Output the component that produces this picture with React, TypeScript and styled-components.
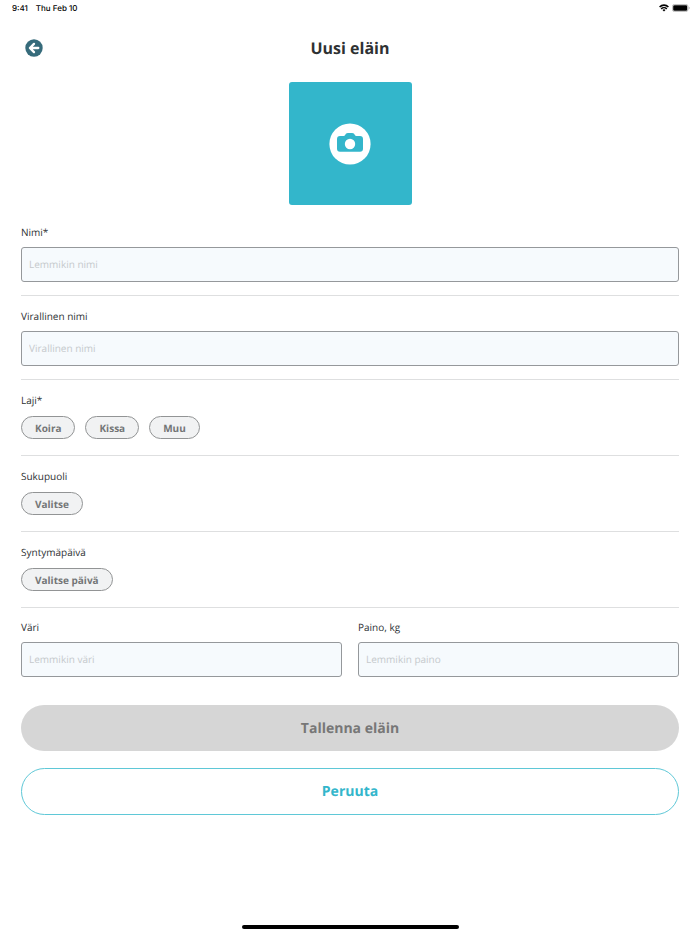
import React from "react";
import styled, { createGlobalStyle } from "styled-components";

const GlobalStyle = createGlobalStyle`
  * { box-sizing: border-box; }
  body {
    margin: 0;
    background: #fff;
    color: #2e3133;
    font-family: "Open Sans", sans-serif;
    text-rendering: geometricPrecision;
  }
  button, input { font-family: inherit; margin: 0; text-rendering: inherit; }
`;

const Screen = styled.div`
  min-height: 100vh;
  display: flex;
  flex-direction: column;
`;

const StatusBar = styled.div`
  display: flex;
  align-items: center;
  justify-content: space-between;
  height: 16px;
  padding: 0 10px 0 12px;
  color: #000;
  font: 500 8px/16px Inter, sans-serif;
`;

const StatusGroup = styled.div<{ $gap: number }>`
  display: flex;
  align-items: center;
  gap: ${(p) => p.$gap}px;
`;

const Header = styled.header`
  display: grid;
  grid-template-columns: 18px 1fr 18px;
  align-items: center;
  height: 64px;
  padding: 0 25px;
`;

const BackButton = styled.button`
  display: flex;
  padding: 0;
  border: 0;
  background: none;
`;

const Title = styled.h1`
  margin: 0;
  text-align: center;
  font-size: 16px;
  line-height: 24px;
  font-weight: 700;
`;

const Form = styled.form`
  display: flex;
  flex-direction: column;
  padding: 2px 21px 0;
`;

const PhotoButton = styled.button`
  display: flex;
  align-items: center;
  justify-content: center;
  align-self: center;
  width: 123px;
  height: 123px;
  margin-bottom: 7px;
  padding: 0;
  border: 0;
  border-radius: 3px;
  background: #33b6cb;
`;

const Section = styled.div`
  display: flex;
  flex-direction: column;
  gap: 7px;
  padding: 12px 0 13px;
  border-bottom: 1px solid #dedfe0;
`;

const ChipSection = styled.fieldset`
  min-width: 0;
  margin: 0;
  padding: 12px 0 16px;
  border: 0;
  border-bottom: 1px solid #dedfe0;
`;

const Columns = styled.div`
  display: grid;
  grid-template-columns: 1fr 1fr;
  gap: 16px;
  padding: 11px 0 28px;
`;

const Field = styled.div`
  display: flex;
  flex-direction: column;
  gap: 7px;
`;

const Label = styled.label`
  font-size: 10px;
  line-height: 16px;
`;

const GroupLabel = styled.div`
  margin-bottom: 8px;
  font-size: 10px;
  line-height: 16px;
`;

const TextInput = styled.input`
  width: 100%;
  height: 35px;
  padding: 0 7px 1px;
  border: 1px solid #95989b;
  border-radius: 3px;
  background: #f6fafd;
  color: #2e3133;
  font-size: 10px;
  &::placeholder { color: #c5c9cc; opacity: 1; }
`;

const Chips = styled.div`
  display: flex;
  flex-wrap: wrap;
  gap: 10px;
`;

const Chip = styled.button`
  height: 23px;
  padding: 0 13px;
  border: 1px solid #929495;
  border-radius: 12px;
  background: #f1f2f3;
  color: #747677;
  font-size: 10px;
  line-height: 16px;
  font-weight: 700;
`;

const ActionButton = styled.button<{ $outlined?: boolean }>`
  height: ${(p) => (p.$outlined ? 47 : 46)}px;
  margin-bottom: 17px;
  border: ${(p) => (p.$outlined ? "1px solid #5fc8d7" : "0")};
  border-radius: 24px;
  background: ${(p) => (p.$outlined ? "#fff" : "#d6d6d6")};
  color: ${(p) => (p.$outlined ? "#33b6cb" : "#777")};
  font-size: 14px;
  font-weight: 700;
`;

const HomeIndicator = styled.div`
  align-self: center;
  width: 31%;
  height: 4px;
  margin: auto 0 5px;
  border-radius: 2px;
  background: #000;
`;

function WifiIcon() {
  return (
    <svg width="10" height="8" viewBox="0 0 10 8" fill="none" stroke="#000" strokeWidth="1.6" aria-hidden="true">
      <path d="M.6 3a6.2 6.2 0 0 1 8.8 0M2.2 4.9a4 4 0 0 1 5.6 0" />
      <path d="M5 7.6 3.5 6.1a2.1 2.1 0 0 1 3 0Z" fill="#000" stroke="none" />
    </svg>
  );
}

function BatteryIcon() {
  return (
    <svg width="18" height="8" viewBox="0 0 18 8" aria-hidden="true">
      <rect x=".4" y=".4" width="15.6" height="7.2" rx="2.2" fill="#fff" stroke="#aaa" strokeWidth=".8" />
      <rect x="1.2" y="1.2" width="14" height="5.6" rx="1.3" />
      <path d="M16.8 2.7v2.6q.9-.3.9-1.3t-.9-1.3Z" fill="#aaa" />
    </svg>
  );
}

function BackIcon() {
  return (
    <svg width="18" height="18" viewBox="0 0 18 18" fill="none" aria-hidden="true">
      <circle cx="9" cy="9" r="8.7" fill="#366b7b" />
      <path d="M9 4.9 4.9 9 9 13.1M5.2 9h8.1" stroke="#fff" strokeWidth="2.3" strokeLinecap="round" strokeLinejoin="round" />
    </svg>
  );
}

function CameraIcon() {
  return (
    <svg width="42" height="42" viewBox="0 0 42 42" aria-hidden="true">
      <circle cx="21" cy="21" r="20.6" fill="#fff" />
      <path
        d="M11 13h3.6q1 0 1.6-1l.5-.9Q17.500 9.900 19 9.900h4q1.500 0 2.300 1.200l.5.900q.6 1 1.600 1H31q3 0 3 3v9.800q0 3-3 3H11q-3 0-3-3V16q0-3 3-3Z"
        fill="#33b6cb"
      />
      <circle cx="21" cy="21" r="5.2" fill="#fff" />
    </svg>
  );
}

interface TextFieldProps {
  id: string;
  label: string;
  placeholder: string;
}

function TextField({ id, label, placeholder }: TextFieldProps) {
  return (
    <Field>
      <Label htmlFor={id}>{label}</Label>
      <TextInput id={id} type="text" placeholder={placeholder} />
    </Field>
  );
}

function ChipGroup({ id, label, options }: { id: string; label: string; options: string[] }) {
  return (
    <ChipSection aria-labelledby={id}>
      <GroupLabel id={id}>{label}</GroupLabel>
      <Chips>
        {options.map((option) => (
          <Chip key={option} type="button">{option}</Chip>
        ))}
      </Chips>
    </ChipSection>
  );
}

export default function App() {
  return (
    <Screen>
      <GlobalStyle />
      <StatusBar>
        <StatusGroup $gap={8}>
          <span>9:41</span>
          <span>Thu Feb 10</span>
        </StatusGroup>
        <StatusGroup $gap={3}>
          <WifiIcon />
          <BatteryIcon />
        </StatusGroup>
      </StatusBar>
      <Header>
        <BackButton type="button" aria-label="Takaisin">
          <BackIcon />
        </BackButton>
        <Title>Uusi eläin</Title>
      </Header>
      <Form>
        <PhotoButton type="button" aria-label="Lisää kuva">
          <CameraIcon />
        </PhotoButton>
        <Section>
          <TextField id="name" label="Nimi*" placeholder="Lemmikin nimi" />
        </Section>
        <Section>
          <TextField id="official-name" label="Virallinen nimi" placeholder="Virallinen nimi" />
        </Section>
        <ChipGroup id="species" label="Laji*" options={["Koira", "Kissa", "Muu"]} />
        <ChipGroup id="sex" label="Sukupuoli" options={["Valitse"]} />
        <ChipGroup id="birthday" label="Syntymäpäivä" options={["Valitse päivä"]} />
        <Columns>
          <TextField id="color" label="Väri" placeholder="Lemmikin väri" />
          <TextField id="weight" label="Paino, kg" placeholder="Lemmikin paino" />
        </Columns>
        <ActionButton type="button">Tallenna eläin</ActionButton>
        <ActionButton type="button" $outlined>Peruuta</ActionButton>
      </Form>
      <HomeIndicator />
    </Screen>
  );
}
